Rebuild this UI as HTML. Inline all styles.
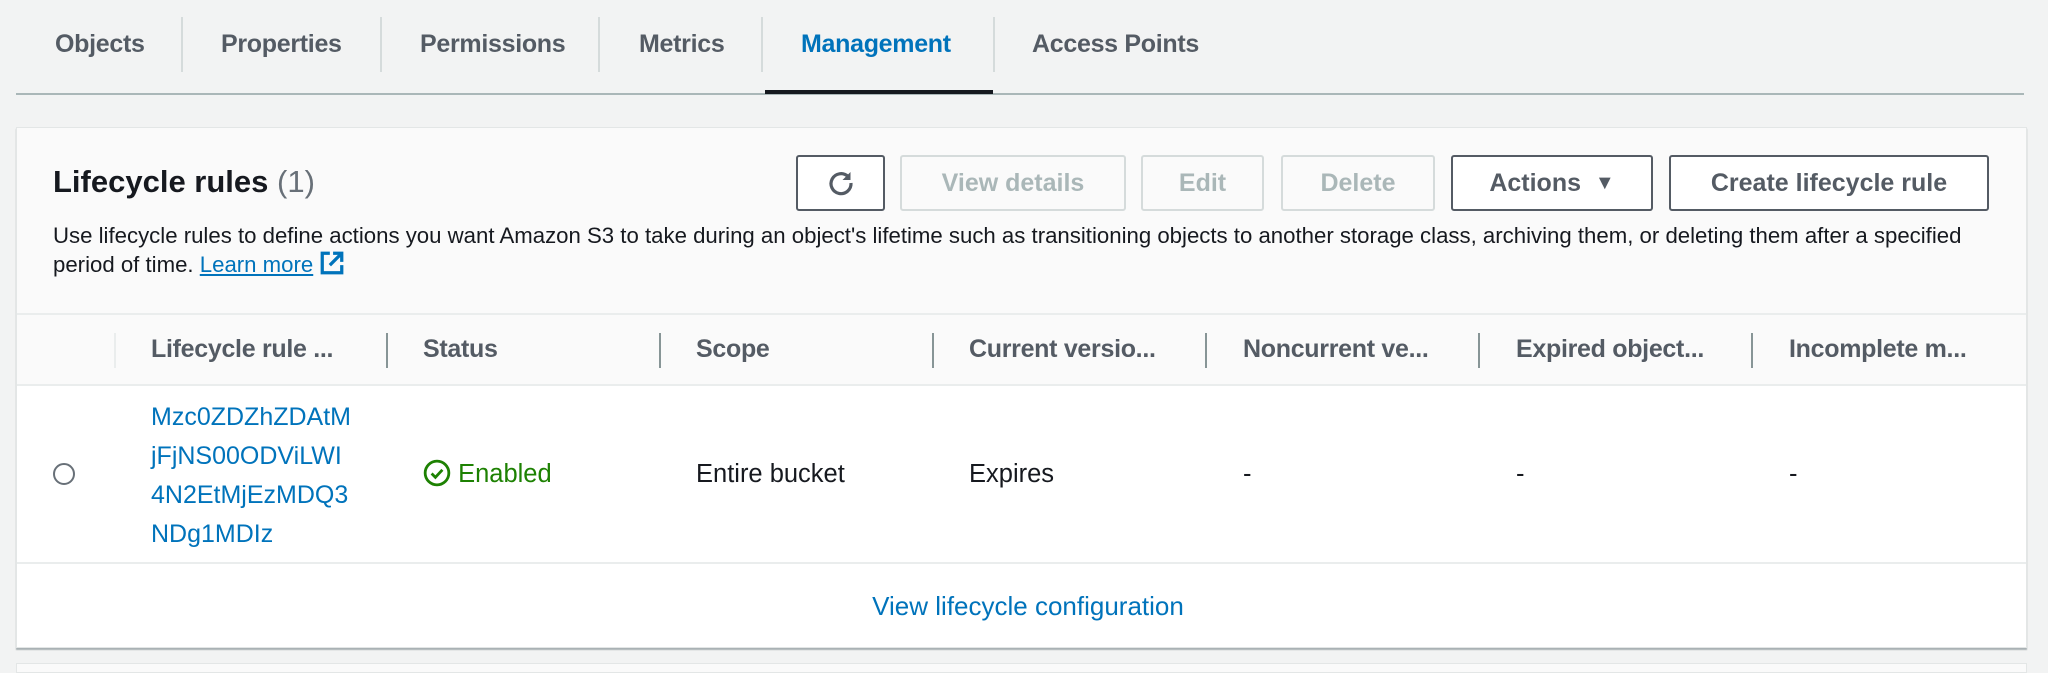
<!DOCTYPE html>
<html><head><meta charset="utf-8"><style>
*{box-sizing:border-box;margin:0;padding:0}
body{width:2048px;height:669px;background:#f2f3f3;font-family:"Liberation Sans",Arial,sans-serif;position:relative;overflow:hidden;color:#16191f}
.a{position:absolute;white-space:nowrap}
.tab{position:absolute;top:29px;font-size:25px;font-weight:bold;color:#545b64;line-height:30px;letter-spacing:-0.3px}
.tsep{position:absolute;top:17px;height:55px;width:2px;background:#d5dbdb}
.btn{position:absolute;top:155px;height:56px;border:2px solid #545b64;border-radius:3px;background:#fff;font-size:25px;font-weight:bold;color:#545b64;display:flex;align-items:center;justify-content:center;white-space:nowrap}
.dis{border-color:#d5dbdb;color:#aab7b8;background:#fafafa}
.th{position:absolute;top:334px;font-size:25px;font-weight:bold;color:#545b64;line-height:30px;letter-spacing:-0.3px}
.hs{position:absolute;top:333px;height:35px;width:2px;background:#879596}
.td{position:absolute;top:459px;font-size:25.5px;line-height:30px;color:#16191f}
</style></head><body>
<div class="tab" style="left:55px">Objects</div>
<div class="tsep" style="left:181px"></div>
<div class="tab" style="left:221px">Properties</div>
<div class="tsep" style="left:380px"></div>
<div class="tab" style="left:420px">Permissions</div>
<div class="tsep" style="left:598px"></div>
<div class="tab" style="left:639px">Metrics</div>
<div class="tsep" style="left:761px"></div>
<div class="tab" style="left:801px;color:#0073bb">Management</div>
<div class="tsep" style="left:993px"></div>
<div class="tab" style="left:1032px">Access Points</div>
<div class="a" style="left:16px;top:93px;width:2008px;height:2px;background:#aab7b8"></div>
<div class="a" style="left:765px;top:90px;width:228px;height:4px;background:#16191f"></div>

<div class="a" style="left:16px;top:127px;width:2011px;height:521px;background:#fafafa;border:1px solid #e3e6e6;box-shadow:0 2px 1px rgba(0,28,36,.3)"></div>
<div class="a" style="left:17px;top:385px;width:2009px;height:262px;background:#fff"></div>
<div class="a" style="left:17px;top:313px;width:2009px;height:2px;background:#eaeded"></div>
<div class="a" style="left:17px;top:384px;width:2009px;height:2px;background:#eaeded"></div>
<div class="a" style="left:17px;top:562px;width:2009px;height:2px;background:#eaeded"></div>
<div class="a" style="left:16px;top:663px;width:2011px;height:10px;background:#fafafa;border:1px solid #e3e6e6"></div>

<div class="a" style="left:53px;top:164px;font-size:31px;font-weight:bold;line-height:36px">Lifecycle rules <span style="font-weight:normal;color:#687078">(1)</span></div>
<div class="btn" style="left:796px;width:89px"><svg width="30" height="30" viewBox="0 0 30 30"><path d="M22 8.5A10 10 0 1 0 25 15" fill="none" stroke="#545b64" stroke-width="3.2"/><path d="M24.5 4v8h-8z" fill="#545b64"/></svg></div>
<div class="btn dis" style="left:900px;width:226px">View details</div>
<div class="btn dis" style="left:1141px;width:123px">Edit</div>
<div class="btn dis" style="left:1281px;width:154px">Delete</div>
<div class="btn" style="left:1451px;width:202px">Actions&nbsp;&nbsp;<span style="font-size:20px">▼</span></div>
<div class="btn" style="left:1669px;width:320px">Create lifecycle rule</div>
<div class="a" style="left:53px;top:221px;font-size:22.2px;line-height:29px;color:#16191f">Use lifecycle rules to define actions you want Amazon S3 to take during an object's lifetime such as transitioning objects to another storage class, archiving them, or deleting them after a specified<br>period of time. <span style="color:#0073bb;text-decoration:underline">Learn more</span> <svg width="26" height="26" viewBox="0 0 24 24" style="vertical-align:-4px"><path d="M10 3H3v18h18v-7" fill="none" stroke="#0073bb" stroke-width="3"/><path d="M13 3h8v8M21 3L10 14" fill="none" stroke="#0073bb" stroke-width="3"/></svg></div>

<div class="hs" style="left:114px;background:#eaeded"></div>
<div class="th" style="left:151px">Lifecycle rule ...</div>
<div class="hs" style="left:386px"></div>
<div class="th" style="left:423px">Status</div>
<div class="hs" style="left:659px"></div>
<div class="th" style="left:696px">Scope</div>
<div class="hs" style="left:932px"></div>
<div class="th" style="left:969px">Current versio...</div>
<div class="hs" style="left:1205px"></div>
<div class="th" style="left:1243px">Noncurrent ve...</div>
<div class="hs" style="left:1478px"></div>
<div class="th" style="left:1516px">Expired object...</div>
<div class="hs" style="left:1751px"></div>
<div class="th" style="left:1789px">Incomplete m...</div>

<div class="a" style="left:53px;top:463px;width:22px;height:22px;border:2px solid #687078;border-radius:50%;background:#fff"></div>
<div class="a" style="left:151px;top:398px;font-size:25px;line-height:39px;color:#0073bb">Mzc0ZDZhZDAtM<br>jFjNS00ODViLWI<br>4N2EtMjEzMDQ3<br>NDg1MDIz</div>
<div class="td" style="left:423px;color:#1d8102"><svg width="28" height="28" viewBox="0 0 26 26" style="vertical-align:-5px"><circle cx="13" cy="13" r="11" fill="none" stroke="#1d8102" stroke-width="2.6"/><path d="M8 13.5l3.5 3.5 6.5-7" fill="none" stroke="#1d8102" stroke-width="2.6"/></svg> Enabled</div>
<div class="td" style="left:696px">Entire bucket</div>
<div class="td" style="left:969px">Expires</div>
<div class="td" style="left:1243px">-</div>
<div class="td" style="left:1516px">-</div>
<div class="td" style="left:1789px">-</div>
<div class="a" style="left:0;width:2048px;top:591px;text-align:center;font-size:26px;line-height:30px;color:#0073bb;padding-left:8px">View lifecycle configuration</div>
</body></html>
